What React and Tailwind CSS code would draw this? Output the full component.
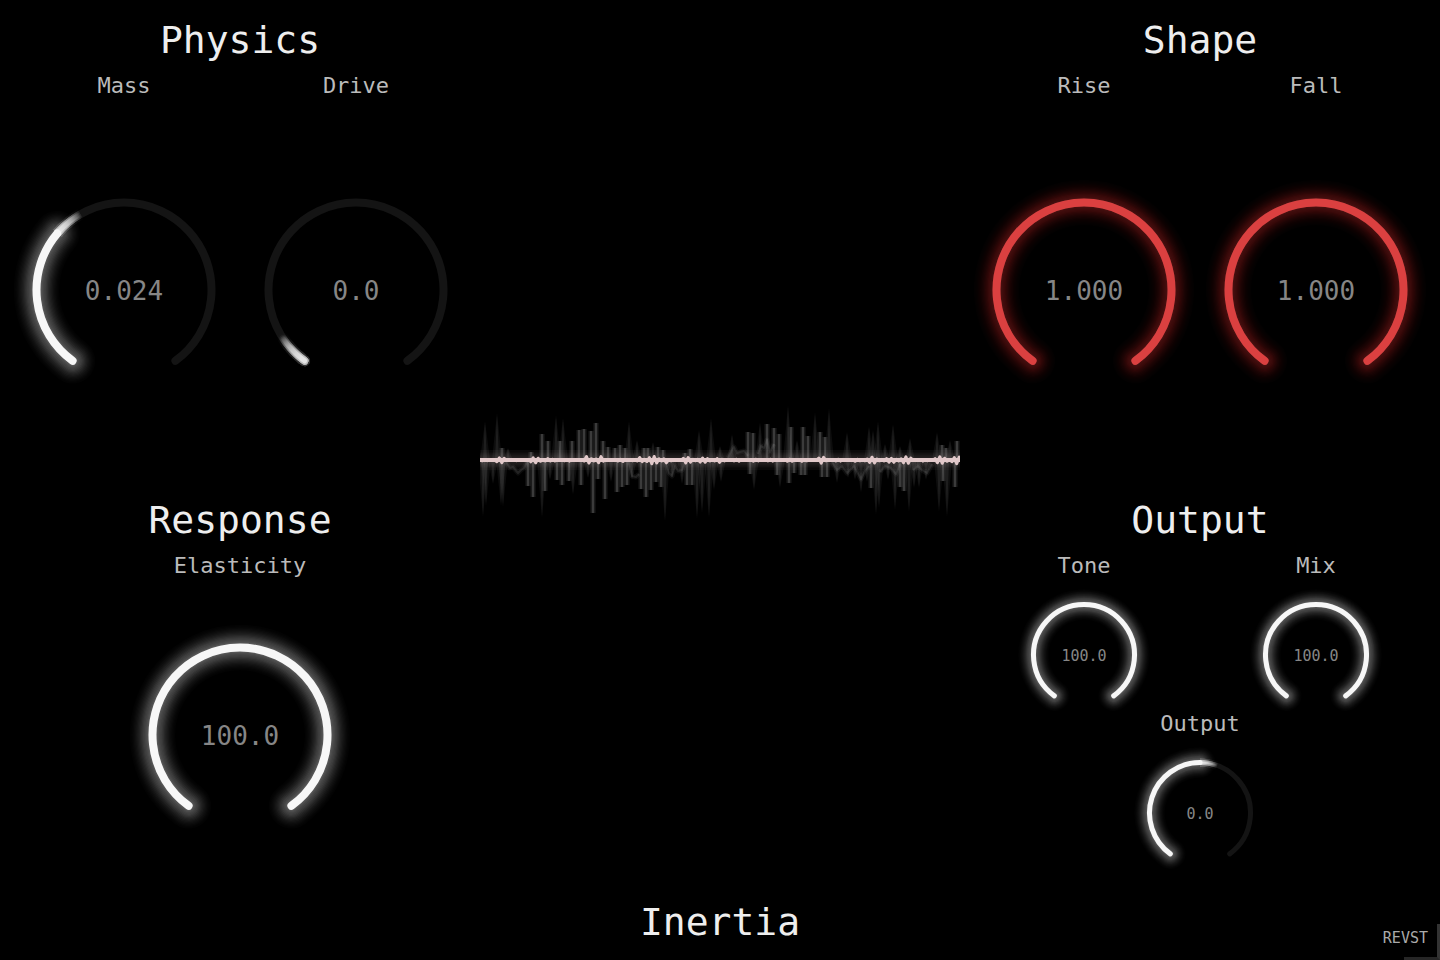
import React, { useState } from "react";

const SWEEP = 288;
const START = -144;
const TAIL = 20;
const GLOW_STEPS = Array.from({ length: 15 }, (_, i) => i + 1);
const TAIL_STEPS = Array.from({ length: 24 }, (_, i) => i);

const SIZES = {
  large: { width: 232, height: 232, cx: 116, cy: 116, radius: 87.5, stroke: 8 },
  small: { width: 150, height: 130, cx: 75, cy: 75, radius: 50.5, stroke: 5 },
};

// angles are in degrees, clockwise from twelve o'clock
const arcPath = ({ cx, cy, radius }, from, to) => {
  const point = (deg) => {
    const rad = (deg * Math.PI) / 180;
    return `${cx + radius * Math.sin(rad)} ${cy - radius * Math.cos(rad)}`;
  };
  const large = to - from > 180 ? 1 : 0;
  return `M ${point(from)} A ${radius} ${radius} 0 ${large} 1 ${point(to)}`;
};

const Dial = ({ size, position, color }) => {
  const dial = SIZES[size];
  const { stroke } = dial;
  const scale = size === "large" ? 2.5 : 1.7;
  const end = START + SWEEP * position;
  const tail = Math.min(TAIL, START + SWEEP - end);
  const filled = arcPath(dial, START, end);

  return (
    <svg
      width={dial.width}
      height={dial.height}
      viewBox={`0 0 ${dial.width} ${dial.height}`}
      fill="none"
      className="overflow-visible"
      aria-hidden="true"
    >
      <path
        d={arcPath(dial, START, START + SWEEP)}
        stroke="#141414"
        strokeWidth={stroke}
        strokeLinecap="round"
      />
      {position > 0 &&
        GLOW_STEPS.map((i) => (
          <path
            key={i}
            d={filled}
            stroke={color}
            strokeOpacity={0.05 * (1 - i / 19)}
            strokeWidth={stroke + i * scale}
            strokeLinecap="round"
          />
        ))}
      {/* each step of the tail reaches back to the start, so the opacities add up towards it */}
      {tail > 1 &&
        TAIL_STEPS.map((i) => {
          const d = arcPath(dial, end, end + (tail * (i + 1)) / TAIL_STEPS.length);
          return (
            <g key={i} stroke={color} strokeLinecap={position === 0 ? "round" : "butt"}>
              <path d={d} strokeOpacity={0.012} strokeWidth={stroke + 4} />
              <path d={d} strokeOpacity={0.05} strokeWidth={stroke} />
              <path d={d} strokeOpacity={0.05} strokeWidth={stroke - 3} />
            </g>
          );
        })}
      {position > 0 && (
        <path d={filled} stroke={color} strokeWidth={stroke} strokeLinecap="round" />
      )}
    </svg>
  );
};

const Knob = ({
  id,
  label,
  initial,
  min = 0,
  max = 100,
  skew = 1,
  digits = 1,
  size = "large",
  color = "#f7f7f7",
}) => {
  const [position, setPosition] = useState(initial);
  const value = min + (max - min) * Math.pow(position, skew);
  const text = value.toFixed(digits);

  return (
    <div className="flex flex-1 flex-col items-center">
      <label htmlFor={id} className="h-7 text-[22px] leading-7 text-[#bbbbbb]">
        {label}
      </label>
      <div className="flex flex-1 items-center">
        <div className="relative">
          <Dial size={size} position={position} color={color} />
          <output
            htmlFor={id}
            className={
              size === "large"
                ? "absolute inset-0 flex items-center justify-center pt-0.5 text-[26px] leading-8 text-[#868686]"
                : "absolute inset-x-0 top-0 flex h-[150px] items-center justify-center pt-0.5 text-[15px] leading-5 text-[#868686]"
            }
          >
            {text}
          </output>
          <input
            id={id}
            type="range"
            min="0"
            max="1"
            step="0.001"
            value={position}
            onChange={(e) => setPosition(Number(e.target.value))}
            aria-valuetext={text}
            className="absolute inset-0 h-full w-full cursor-pointer opacity-0"
          />
        </div>
      </div>
    </div>
  );
};

const Section = ({ title, className = "", children }) => (
  <section className={`flex flex-col px-2 pt-2 ${className}`}>
    <h2 className="h-16 text-center text-[38px] leading-16 text-[#eeeeee]">{title}</h2>
    {children}
  </section>
);

// [x, y] of bar and spike tips, the centre line is y = 60
const BARS = [
  [22, 48], [51, 52], [62, 34], [68, 41], [80, 41], [92, 41], [99, 30], [104, 29],
  [111, 31], [116, 23], [123, 41], [128, 47], [135, 48], [140, 45], [145, 48],
  [164, 48], [168, 48], [178, 47], [183, 50], [205, 53], [210, 49], [268, 32],
  [273, 33], [287, 24], [294, 28], [299, 34], [311, 27], [323, 27], [328, 36],
  [340, 32], [345, 37], [462, 45], [466, 48], [477, 41],
  [48, 86], [53, 97], [65, 91], [77, 80], [82, 85], [89, 81], [101, 85], [113, 113],
  [118, 79], [125, 99], [137, 92], [142, 87], [147, 85], [161, 89], [166, 97],
  [171, 90], [176, 82], [181, 87], [207, 85], [212, 85], [270, 74], [297, 75],
  [309, 83], [314, 73], [321, 75], [325, 75], [342, 77], [347, 77], [391, 88],
  [420, 87], [424, 91], [463, 81], [475, 87],
];

const SPIKES = [
  [5, 21], [17, 13], [28, 48], [76, 15], [83, 18], [149, 21], [157, 40], [173, 42],
  [219, 30], [231, 18], [240, 46], [252, 34], [280, 22], [308, 5], [317, 40],
  [335, 12], [349, 8], [367, 32], [389, 26], [393, 30], [398, 21], [405, 44],
  [413, 24], [420, 46], [430, 38], [457, 32], [470, 40],
  [3, 117], [6, 106], [13, 84], [21, 106], [23, 107], [62, 118], [70, 80], [93, 95],
  [108, 78], [131, 82], [152, 80], [185, 122], [192, 78], [202, 84], [217, 119],
  [222, 113], [229, 118], [234, 90], [241, 82], [274, 90], [300, 88], [357, 83],
  [368, 78], [375, 80], [381, 93], [387, 82], [396, 115], [399, 108], [408, 80],
  [415, 110], [429, 112], [434, 88], [439, 88], [446, 80], [459, 112], [467, 117],
];

const ECHOES = [
  "26,62 30,68 33,67 38,73 41,70 44,68 48,60",
  "149,62 152,76 156,77 159,74",
  "185,60 189,73 192,76 195,66 198,71 202,70 205,62",
  "248,58 252,50 254,47 257,53 260,52 264,51 268,56",
  "278,54 281,46 284,48 287,40 290,52 294,44",
  "352,62 357,70 362,66 367,73 371,69 374,66 381,79 385,71 389,66",
  "400,72 405,66 411,68 416,74 420,64",
  "433,70 438,66 442,70 447,73 452,64",
];

// [up to x, amplitude] of the live signal
const LEVELS = [
  [16, 0.7], [26, 2.5], [48, 0.5], [68, 2.6], [106, 0.9], [122, 3.8], [142, 0.9],
  [152, 1.8], [158, 0.8], [188, 3.8], [202, 0.6], [222, 2.8], [242, 2.2], [310, 1],
  [324, 1.6], [338, 0.6], [346, 3], [384, 1], [396, 3], [412, 2], [432, 3.4],
  [454, 0.9], [480, 3.4],
];

const Waveform = () => {
  const signal = Array.from({ length: 200 }, (_, i) => {
    const x = i * 2.42;
    const [, level] = LEVELS.find(([limit]) => x < limit) || [480, 3];
    const y = 60.2 + (i % 2 ? 1 : -1) * level * (0.6 + 0.4 * Math.sin(i * 0.9));
    return `${x.toFixed(1)},${y.toFixed(1)}`;
  }).join(" ");

  return (
    <svg
      viewBox="0 0 480 120"
      className="w-full"
      fill="none"
      role="img"
      aria-label="Output waveform"
    >
      {SPIKES.map(([x, y]) => (
        <g key={`${x}-${y}`} fill="#ffffff">
          <path d={`M ${x - 5} 60 L ${x} ${y} L ${x + 5} 60 Z`} fillOpacity={0.05} />
          <path d={`M ${x - 2} 60 L ${x} ${y} L ${x + 2} 60 Z`} fillOpacity={0.07} />
        </g>
      ))}
      {BARS.map(([x, y]) => (
        <g key={`${x}-${y}`} fill="#ffffff">
          <rect x={x - 3} y={Math.min(y, 60)} width={6} height={Math.abs(60 - y)} fillOpacity={0.05} />
          <rect x={x - 2} y={Math.min(y, 60)} width={4} height={Math.abs(60 - y)} fillOpacity={0.06} />
          <rect x={x - 1} y={Math.min(y, 60)} width={2} height={Math.abs(60 - y)} fillOpacity={0.14} />
        </g>
      ))}
      {ECHOES.map((points) => (
        <g key={points} stroke="#ffffff" strokeLinejoin="round">
          <polyline points={points} strokeOpacity={0.05} strokeWidth={5} />
          <polyline points={points} strokeOpacity={0.09} strokeWidth={2} />
        </g>
      ))}
      {[20, 15, 11, 7].map((width) => (
        <path
          key={width}
          d="M 0 60 H 480"
          stroke="#e2c6c7"
          strokeOpacity={0.045}
          strokeWidth={width}
        />
      ))}
      <path d="M 0 60 H 480" stroke="#e2c9ca" strokeWidth={4} />
      <polyline
        points={signal}
        stroke="#e2c9ca"
        strokeWidth={3}
        strokeLinejoin="round"
      />
    </svg>
  );
};

const App = () => {
  return (
    <main className="relative grid min-h-screen grid-cols-3 overflow-hidden bg-black font-['DejaVu_Sans_Mono','Liberation_Mono',monospace]">
      <div className="grid grid-rows-2">
        <Section title="Physics">
          <div className="flex flex-1">
            <Knob id="mass" label="Mass" initial={0.327} max={1} skew={3.337} digits={3} />
            <Knob id="drive" label="Drive" initial={0} />
          </div>
        </Section>
        <Section title="Response" className="pb-[70px]">
          <div className="flex flex-1">
            <Knob id="elasticity" label="Elasticity" initial={1} />
          </div>
        </Section>
      </div>

      <div className="flex flex-col">
        <div className="flex flex-1 items-center pt-9">
          <Waveform />
        </div>
        <h1 className="h-19 text-center text-[38px] leading-19 text-[#eeeeee]">Inertia</h1>
      </div>

      <div className="grid grid-rows-2">
        <Section title="Shape">
          <div className="flex flex-1">
            <Knob id="rise" label="Rise" initial={1} max={1} digits={3} color="#db4040" />
            <Knob id="fall" label="Fall" initial={1} max={1} digits={3} color="#db4040" />
          </div>
        </Section>
        <Section title="Output">
          <div className="flex">
            <Knob id="tone" label="Tone" initial={1} size="small" />
            <Knob id="mix" label="Mix" initial={1} size="small" />
          </div>
          <div className="flex">
            <Knob id="output" label="Output" initial={0.5} min={-24} max={24} size="small" />
          </div>
        </Section>
      </div>

      <span className="absolute right-3 bottom-3 text-[15px] leading-5 text-[#aaaaaa]">REVST</span>
      <div className="absolute right-0 bottom-0 size-9 border-r-3 border-b-3 border-r-[#333333] border-b-[#262626]"></div>
    </main>
  );
};

export default App;
